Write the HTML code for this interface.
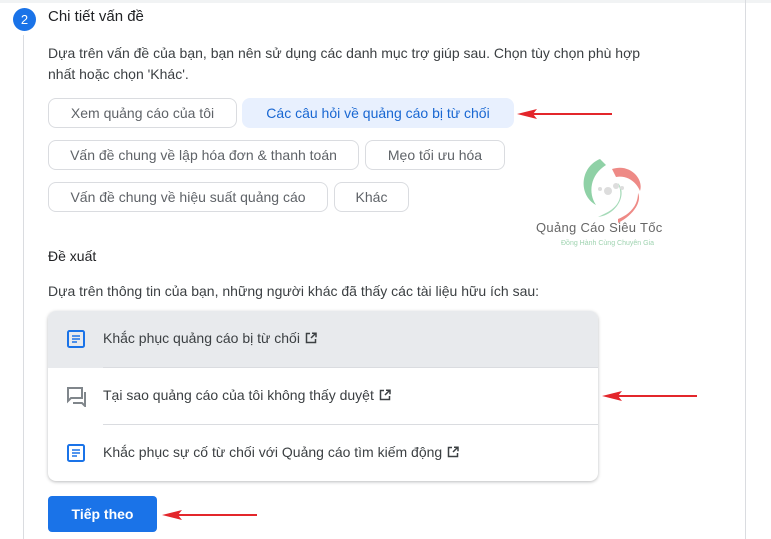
<!DOCTYPE html>
<html><head><meta charset="utf-8"><style>
body{margin:0;width:771px;height:539px;background:#fff;position:relative;overflow:hidden;font-family:"Liberation Sans",Arial,sans-serif;color:#3c4043}
.a{position:absolute}
.chip{position:absolute;height:30px;border:1px solid #dadce0;border-radius:8px;box-sizing:border-box;font-size:14px;line-height:28px;text-align:center;color:#5f6368}
.row{position:absolute;left:0;width:550px;height:57px;font-size:14px;color:#3c4043}
.row span{position:absolute;left:55px;top:19px;white-space:nowrap}
.ext{display:inline-block;vertical-align:-1px;margin-left:5px}
</style></head><body>
<div class="a" style="left:0;top:0;width:771px;height:3px;background:#f1f3f4"></div>
<div class="a" style="left:745px;top:0;width:1px;height:539px;background:#dadce0"></div>
<div class="a" style="left:13px;top:8px;width:23px;height:23px;border-radius:50%;background:#1a73e8;color:#fff;font-size:13px;text-align:center;line-height:23px">2</div>
<div class="a" style="left:23px;top:35px;width:1px;height:504px;background:#dadce0"></div>
<div class="a" style="left:48px;top:8px;font-size:15px;color:#202124">Chi tiết vấn đề</div>
<div class="a" style="left:48px;top:43px;font-size:14px;line-height:21px;width:620px">Dựa trên vấn đề của bạn, bạn nên sử dụng các danh mục trợ giúp sau. Chọn tùy chọn phù hợp nhất hoặc chọn 'Khác'.</div>
<div class="chip" style="left:48px;top:98px;width:189px">Xem quảng cáo của tôi</div>
<div class="chip" style="left:242px;top:98px;width:272px;background:#e8f0fe;border-color:#e8f0fe;color:#1967d2">Các câu hỏi về quảng cáo bị từ chối</div>
<div class="chip" style="left:48px;top:140px;width:311px">Vấn đề chung về lập hóa đơn &amp; thanh toán</div>
<div class="chip" style="left:365px;top:140px;width:140px">Mẹo tối ưu hóa</div>
<div class="chip" style="left:48px;top:182px;width:280px">Vấn đề chung về hiệu suất quảng cáo</div>
<div class="chip" style="left:334px;top:182px;width:75px">Khác</div>
<svg class="a" style="left:515px;top:106px" width="100" height="16"><line x1="8" y1="8" x2="97" y2="8" stroke="#e3262b" stroke-width="2"/><path d="M2 8 L22 3 L18 8 L22 13Z" fill="#e3262b"/></svg>
<svg class="a" style="left:578px;top:155px" width="70" height="70" viewBox="0 0 70 70"><path d="M22 4 C2 12 0 40 18 50 C10 38 12 20 28 10Z" fill="#8fd1a6"/><path d="M20 62 C38 60 50 40 40 28 C46 42 40 52 28 58Z" fill="#8fd1a6" opacity=".8"/><path d="M34 14 C52 8 66 24 62 36 C58 26 48 20 38 22Z" fill="#ee8a86"/><path d="M40 68 C56 60 64 46 60 38 C60 52 50 60 40 64Z" fill="#ee8a86"/><circle cx="30" cy="36" r="4" fill="#ddd"/><circle cx="38" cy="31" r="3" fill="#ddd"/><circle cx="22" cy="34" r="2" fill="#ddd"/><circle cx="44" cy="33" r="2" fill="#ddd"/></svg>
<div class="a" style="left:536px;top:220px;font-size:13px;color:#666;letter-spacing:.3px">Quảng Cáo Siêu Tốc</div>
<div class="a" style="left:561px;top:240px;font-size:7px;color:#9fd3b0">Đồng Hành Cùng Chuyên Gia</div>
<div class="a" style="left:48px;top:248px;font-size:14px;color:#202124">Đề xuất</div>
<div class="a" style="left:48px;top:283px;font-size:14px">Dựa trên thông tin của bạn, những người khác đã thấy các tài liệu hữu ích sau:</div>
<div class="a" style="left:48px;top:311px;width:550px;height:170px;border-radius:8px;box-shadow:0 1px 3px rgba(60,64,67,.35);overflow:hidden;background:#fff">
<div class="row" style="top:0;background:#e8eaed"><svg class="a" style="left:19px;top:19px" width="18" height="18"><rect x="1" y="1" width="16" height="16" rx="1.5" fill="none" stroke="#1a73e8" stroke-width="2"/><path d="M5 6h8M5 9h8M5 12h5" stroke="#1a73e8" stroke-width="1.6"/></svg><span>Khắc phục quảng cáo bị từ chối<svg class="ext" width="12" height="12"><path d="M5 1.5H1.5v9h9V7" fill="none" stroke="#3c4043" stroke-width="1.5"/><path d="M6 6L10.5 1.5M7 1.2h4v4" fill="none" stroke="#3c4043" stroke-width="1.5"/></svg></span></div>
<div class="row" style="top:57px"><svg class="a" style="left:19px;top:19px" width="20" height="20"><path d="M1 1h14v10H4L1 14Z" fill="none" stroke="#80868b" stroke-width="2"/><path d="M18 5v14l-3-3H6" fill="none" stroke="#80868b" stroke-width="2"/></svg><span>Tại sao quảng cáo của tôi không thấy duyệt<svg class="ext" width="12" height="12"><path d="M5 1.5H1.5v9h9V7" fill="none" stroke="#3c4043" stroke-width="1.5"/><path d="M6 6L10.5 1.5M7 1.2h4v4" fill="none" stroke="#3c4043" stroke-width="1.5"/></svg></span></div>
<div class="a" style="left:55px;top:56px;width:495px;height:1px;background:#dadce0"></div>
<div class="row" style="top:114px"><svg class="a" style="left:19px;top:19px" width="18" height="18"><rect x="1" y="1" width="16" height="16" rx="1.5" fill="none" stroke="#1a73e8" stroke-width="2"/><path d="M5 6h8M5 9h8M5 12h5" stroke="#1a73e8" stroke-width="1.6"/></svg><span>Khắc phục sự cố từ chối với Quảng cáo tìm kiếm động<svg class="ext" width="12" height="12"><path d="M5 1.5H1.5v9h9V7" fill="none" stroke="#3c4043" stroke-width="1.5"/><path d="M6 6L10.5 1.5M7 1.2h4v4" fill="none" stroke="#3c4043" stroke-width="1.5"/></svg></span></div>
<div class="a" style="left:55px;top:113px;width:495px;height:1px;background:#dadce0"></div>
</div>
<svg class="a" style="left:600px;top:388px" width="100" height="16"><line x1="8" y1="8" x2="97" y2="8" stroke="#e3262b" stroke-width="2"/><path d="M2 8 L22 3 L18 8 L22 13Z" fill="#e3262b"/></svg>
<div class="a" style="left:48px;top:496px;width:109px;height:36px;background:#1a73e8;border-radius:4px;color:#fff;font-size:14px;font-weight:bold;text-align:center;line-height:36px">Tiếp theo</div>
<svg class="a" style="left:160px;top:507px" width="100" height="16"><line x1="8" y1="8" x2="97" y2="8" stroke="#e3262b" stroke-width="2"/><path d="M2 8 L22 3 L18 8 L22 13Z" fill="#e3262b"/></svg>
</body></html>
